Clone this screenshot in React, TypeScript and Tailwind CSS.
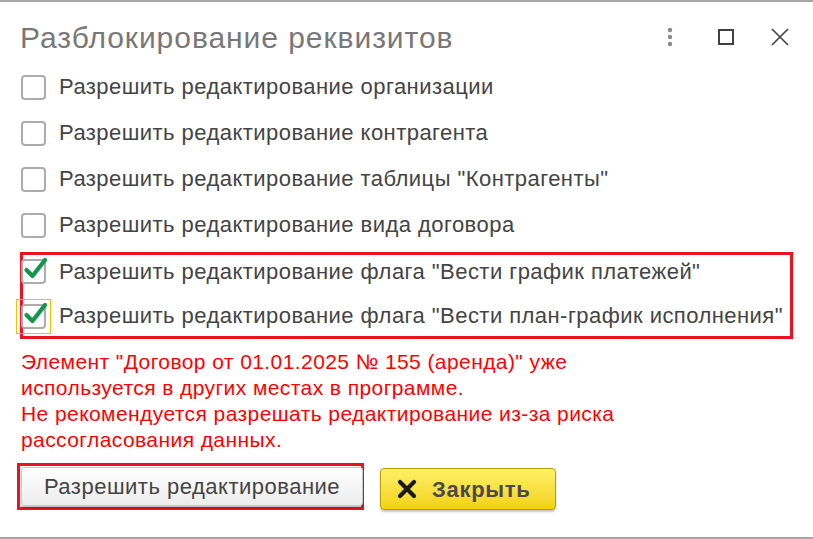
import React from "react";

const font = { fontFamily: '"Liberation Sans", Arial, sans-serif' };

function Box({ checked }: { checked?: boolean }) {
  return (
    <div className="relative w-[25px] h-[25px] shrink-0">
      <div className="absolute inset-0 rounded-[4px] border-2 border-[#acacac] bg-white" />
      {checked && (
        <svg className="absolute left-[2px] top-[-3px]" width="26" height="26" viewBox="0 0 26 26">
          <path d="M3.5 14 L9.5 20 L22 4" fill="none" stroke="#12964a" strokeWidth="4.2" strokeLinecap="round" strokeLinejoin="round" />
        </svg>
      )}
    </div>
  );
}

const labelCls = "text-[22px] leading-[24px] tracking-[0.45px] text-[#444444] whitespace-nowrap";

function Row({ label, className }: { label: string; className?: string }) {
  return (
    <div className={"flex items-center gap-[13px] " + (className ?? "")}>
      <Box />
      <span className={labelCls}>{label}</span>
    </div>
  );
}

export default function App() {
  return (
    <div style={font} className="w-[813px] h-[539px] bg-white border-t-2 border-b-2 border-[#a6a6a6] flex flex-col overflow-hidden">
      <div className="flex items-center h-[62px] pl-[20px] pr-[24px]">
        <div className="text-[30px] leading-[32px] tracking-[0.95px] text-[#787878] flex-1 mt-[9px]">Разблокирование реквизитов</div>
        <div className="flex items-center mt-[8px]">
          <svg width="6" height="20" viewBox="0 0 6 20" className="mr-[44px]">
            <circle cx="3" cy="3" r="2.2" fill="#8a8a8a" />
            <circle cx="3" cy="10" r="2.2" fill="#8a8a8a" />
            <circle cx="3" cy="17" r="2.2" fill="#8a8a8a" />
          </svg>
          <svg width="18" height="18" viewBox="0 0 18 18" className="mr-[36px]">
            <rect x="2" y="2" width="14" height="14" fill="none" stroke="#404040" strokeWidth="2" />
          </svg>
          <svg width="18" height="18" viewBox="0 0 18 18">
            <path d="M1 1 L17 17 M17 1 L1 17" stroke="#404040" strokeWidth="1.6" />
          </svg>
        </div>
      </div>
      <div className="flex flex-col pl-[21px]">
        <Row className="h-[46px]" label="Разрешить редактирование организации" />
        <Row className="h-[46px]" label="Разрешить редактирование контрагента" />
        <Row className="h-[46px]" label={'Разрешить редактирование таблицы "Контрагенты"'} />
        <Row className="h-[46px]" label="Разрешить редактирование вида договора" />
      </div>
      <div className="ml-[20px] w-[773px] mt-[4px] border-[3px] border-[#e8141f] flex flex-col">
        <div className="h-[39px] flex items-start pt-[4px]">
          <div className="flex items-center gap-[13px] -ml-[2px]">
            <Box checked />
            <span className={labelCls}>Разрешить редактирование флага "Вести график платежей"</span>
          </div>
        </div>
        <div className="h-[42px] flex items-center pt-[2px]">
          <div className="flex items-center -ml-[7px]">
            <div className="border border-[#f2c200] p-[4px]">
              <Box checked />
            </div>
            <span className={"ml-[8px] " + labelCls}>Разрешить редактирование флага "Вести план-график исполнения"</span>
          </div>
        </div>
      </div>
      <div className="mt-[10px] pl-[21px] text-[21px] leading-[26px] tracking-[0.42px] text-[#ff0000]">
        Элемент "Договор от 01.01.2025 № 155 (аренда)" уже
        <br />
        используется в других местах в программе.
        <br />
        Не рекомендуется разрешать редактирование из-за риска
        <br />
        рассогласования данных.
      </div>
      <div className="flex items-start mt-[10px] pl-[17px]">
        <div className="border-[3px] border-[#e8141f] w-[347px] h-[47px] pl-[1px] pt-[1px]">
          <div className="h-[39px] w-[342px] rounded-[3px] border border-[#c8c8c8] bg-gradient-to-b from-white to-[#ececec] shadow-[0_2px_2px_rgba(0,0,0,0.25)] flex items-center justify-center text-[22px] tracking-[0.5px] text-[#444444]">
            Разрешить редактирование
          </div>
        </div>
        <div className="ml-[16px] mt-[5px] h-[42px] w-[176px] rounded-[4px] border border-[#b49e00] bg-gradient-to-b from-[#fff064] to-[#f2d200] shadow-[0_2px_2px_rgba(0,0,0,0.22)] flex items-center pl-[16px]">
          <svg width="20" height="20" viewBox="0 0 20 20">
            <path d="M3 3 L17 17 M17 3 L3 17" stroke="#1a1a1a" strokeWidth="4.2" strokeLinecap="round" />
          </svg>
          <span className="ml-[15px] text-[22px] tracking-[0.7px] font-bold text-[#4a4a4a]">Закрыть</span>
        </div>
      </div>
    </div>
  );
}
